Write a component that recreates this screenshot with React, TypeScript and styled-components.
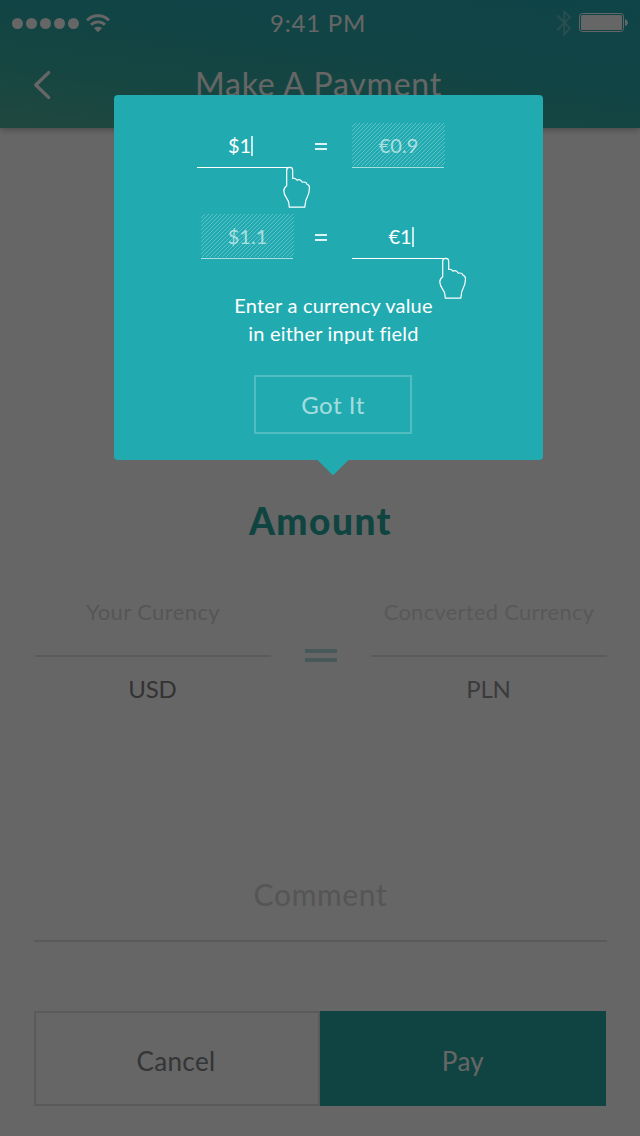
import React from "react";
import styled, { createGlobalStyle } from "styled-components";

const GlobalStyle = createGlobalStyle`
  * { box-sizing: border-box; }
  html, body { margin: 0; padding: 0; background: #fff; }
  body { font-family: Lato, "Liberation Sans", sans-serif; }
  button { font-family: inherit; margin: 0; padding: 0; border: 0; background: none; }
`;

const Screen = styled.div`
  position: relative;
  width: 640px;
  height: 1136px;
  overflow: hidden;
  background: #fff;
  display: flex;
  flex-direction: column;
`;

const Header = styled.header`
  height: 128px;
  flex: none;
  color: #fff;
  background: linear-gradient(188deg, #26aab4 0%, #2caaaa 45%, #3cb0a4 75%, #55b39a 105%);
  box-shadow: 0 1px 7px rgba(0, 0, 0, 0.35);
`;

const StatusBar = styled.div`
  height: 46px;
  display: grid;
  grid-template-columns: 1fr auto 1fr;
  align-items: center;
  padding: 0 12px;
`;

const Signal = styled.div`
  display: flex;
  align-items: center;
  gap: 3px;
  padding-top: 1px;
`;

const Dot = styled.i`
  width: 11px;
  height: 11px;
  border-radius: 50%;
  background: #fff;
`;

const WifiIcon = styled.svg`
  margin-left: 4px;
  display: block;
`;

const Clock = styled.time`
  font-size: 24px;
  line-height: 46px;
  letter-spacing: 0.75px;
  padding-right: 4px;
`;

const Power = styled.div`
  display: flex;
  align-items: center;
  justify-content: flex-end;
  gap: 7px;
`;

const NavBar = styled.nav`
  height: 78px;
  display: grid;
  grid-template-columns: 60px 1fr 60px;
  align-items: center;
`;

const BackButton = styled.button`
  width: 60px;
  height: 78px;
  display: block;
`;

const Title = styled.h1`
  margin: 0;
  text-align: center;
  font-size: 32px;
  line-height: 76px;
  height: 78px;
  font-weight: 400;
  letter-spacing: 0.75px;
  padding-right: 3px;
`;

const Main = styled.main`
  flex: 1;
  display: flex;
  flex-direction: column;
  padding: 370px 33px 30px 34px;
`;

const Heading = styled.h2`
  margin: 0;
  height: 44px;
  line-height: 46px;
  text-align: center;
  font-size: 37px;
  font-weight: 900;
  letter-spacing: 1.5px;
  color: #2aaaa2;
`;

const Conversion = styled.section`
  margin-top: 50px;
  padding-left: 1px;
  display: grid;
  grid-template-columns: 236px 1fr 236px;
`;

const CurrencyField = styled.div`
  text-align: center;
`;

const FieldLabel = styled.div<{ $color: string; $spacing: number }>`
  height: 63px;
  line-height: 40px;
  font-size: 22px;
  letter-spacing: ${(p) => p.$spacing}px;
  color: ${(p) => p.$color};
`;

const Rule = styled.div`
  height: 2px;
  background: #e4e4e4;
`;

const CurrencyCode = styled.div<{ $color: string }>`
  height: 64px;
  line-height: 64px;
  font-size: 24px;
  letter-spacing: -0.2px;
  padding-right: 1px;
  color: ${(p) => p.$color};
`;

const BigEquals = styled.div`
  width: 32px;
  height: 13px;
  margin: 57px 0 0 34px;
  border-top: 4px solid #aedfdb;
  border-bottom: 4px solid #aedfdb;
`;

const Comment = styled.div`
  margin-top: 149px;
  height: 72px;
  line-height: 48px;
  font-size: 30px;
  text-align: center;
  letter-spacing: 0.65px;
  color: #d4d4d4;
  border-bottom: 2px solid #e0e0e0;
`;

const Actions = styled.div`
  margin-top: 69px;
  width: 572px;
  height: 95px;
  display: grid;
  grid-template-columns: 1fr 1fr;
`;

const ActionButton = styled.button<{ $primary?: boolean }>`
  height: 95px;
  padding: 5px ${(p) => (p.$primary ? 0 : 2)}px 0 0;
  font-size: 26px;
  line-height: 86px;
  letter-spacing: 0.35px;
  border: 2px solid ${(p) => (p.$primary ? "#2aaaa5" : "#e2e2e2")};
  background: ${(p) => (p.$primary ? "#2aaaa5" : "transparent")};
  color: ${(p) => (p.$primary ? "#fff" : "#808488")};
`;

const Scrim = styled.div`
  position: absolute;
  inset: 0;
  background: rgba(0, 0, 0, 0.6);
`;

const Popover = styled.div`
  position: absolute;
  left: 114px;
  top: 95px;
  width: 429px;
  height: 365px;
  border-radius: 4px;
  background: #21abb0;
  color: #fff;
  padding-top: 28px;
`;

const Arrow = styled.svg`
  position: absolute;
  left: 203px;
  top: 364px;
`;

const ExampleRow = styled.div`
  height: 45px;
  margin-bottom: 46px;
  padding-left: 83px;
  display: grid;
  grid-template-columns: 96px 59px 93px;
`;

const ExampleField = styled.div<{ $disabled?: boolean; $end?: boolean }>`
  position: relative;
  width: ${(p) => (p.$disabled ? 93 : 92)}px;
  justify-self: ${(p) => (p.$end ? "end" : "start")};
  margin-right: ${(p) => (p.$end ? -1 : 0)}px;
  height: 45px;
  display: flex;
  flex-direction: column;
  color: ${(p) => (p.$disabled ? "rgba(255,255,255,0.6)" : "#fff")};
`;

const ExampleValue = styled.div<{ $disabled?: boolean; $before?: number; $after?: number }>`
  height: 43px;
  margin-bottom: 1px;
  display: flex;
  align-items: center;
  justify-content: center;
  font-size: 20px;
  line-height: 24px;
  padding: 0 ${(p) => p.$after || 0}px 0 ${(p) => p.$before || 0}px;
  background: ${(p) =>
    p.$disabled
      ? "repeating-linear-gradient(135deg, rgba(255,255,255,0.27) 0 0.7px, transparent 0.7px 2.8284px)"
      : "none"};
`;

const Underline = styled.div<{ $disabled?: boolean }>`
  width: 92px;
  height: 1px;
  background: ${(p) => (p.$disabled ? "rgba(255,255,255,0.6)" : "#fff")};
`;

const Caret = styled.i`
  width: 2px;
  height: 20px;
  margin: 2px 0 0 0;
  background: rgba(255, 255, 255, 0.75);
`;

const Equals = styled.div`
  width: 12px;
  height: 7px;
  margin: 20px 0 0 22px;
  border-top: 2px solid rgba(255, 255, 255, 0.85);
  border-bottom: 2px solid rgba(255, 255, 255, 0.85);
`;

const Hand = styled.svg<{ $x: number }>`
  position: absolute;
  left: ${(p) => p.$x}px;
  top: 41px;
`;

const Hint = styled.p`
  margin: -14px 0 0;
  padding-left: 10px;
  text-align: center;
  font-size: 20px;
  line-height: 28px;
  letter-spacing: 0.2px;
`;

const GotItButton = styled.button`
  display: block;
  width: 158px;
  height: 59px;
  margin: 28px 0 0 140px;
  border: 2px solid rgba(255, 255, 255, 0.22);
  color: rgba(255, 255, 255, 0.62);
  font-size: 24px;
  letter-spacing: 0.5px;
`;

const PointingHand = ({ x }: { x: number }) => (
  <Hand $x={x} width="32" height="44" viewBox="0 0 32 44" fill="none" stroke="#fff" strokeWidth="1.2" strokeLinejoin="round">
    <path d="M5.7 21.8V6.2C5.7 2.4 11.7 2.4 11.7 6.2V14.4C13.2 14 14.9 14.6 16 16.2C18 15.3 20.2 16.2 21.3 18.2C23.6 17.5 25.4 18.6 25.8 20C27.6 20.6 28.5 21.8 28.5 23.8C28.5 33 24.4 33.5 24.4 39.2L23.8 43.2H8.3L7.8 39C7.8 35.5 2.8 32.5 2.8 27C2.8 24 3.6 23.2 5.7 21.8Z" />
  </Hand>
);

export default function App() {
  return (
    <>
      <GlobalStyle />
      <Screen>
        <Header>
          <StatusBar>
            <Signal>
              {[0, 1, 2, 3, 4].map((n) => (
                <Dot key={n} />
              ))}
              <WifiIcon width="24" height="19" viewBox="0 0 24 19" fill="none" stroke="#fff">
                <path d="M1 6.4C7 .2 17 .2 23 6.4" strokeWidth="2.8" />
                <path d="M5 10.8C9 6.8 15 6.8 19 10.8" strokeWidth="2.8" />
                <path d="M12 18.2L8 14.2C10.2 12.3 13.8 12.3 16 14.2Z" fill="#fff" stroke="none" />
              </WifiIcon>
            </Signal>
            <Clock>9:41 PM</Clock>
            <Power>
              <svg width="16" height="28" viewBox="0 0 16 28" fill="none" stroke="#fff" strokeOpacity="0.3" strokeWidth="1.8">
                <path d="M1.2 6.5L14 19.3L8.2 25.2V2.8L14 8.2L1.2 21" />
              </svg>
              <svg width="49" height="20" viewBox="0 0 49 20">
                <rect x="0.5" y="0.5" width="44" height="18" rx="3" fill="none" stroke="#fff" />
                <rect x="2" y="2" width="41" height="15" rx="1.5" fill="#fff" />
                <path d="M46 6.2C49.8 6.6 49.8 12.4 46 12.8Z" fill="#fff" />
              </svg>
            </Power>
          </StatusBar>
          <NavBar>
            <BackButton aria-label="Back">
              <svg width="60" height="78" viewBox="0 0 60 78" fill="none" stroke="#fff" strokeWidth="3.4" strokeLinecap="round" strokeLinejoin="round">
                <path d="M48.6 26.6L35.8 39L48.6 51.4" />
              </svg>
            </BackButton>
            <Title>Make A Payment</Title>
          </NavBar>
        </Header>
        <Main>
          <Heading>Amount</Heading>
          <Conversion>
            <CurrencyField>
              <FieldLabel $color="#d6d6d6" $spacing={0.4}>Your Curency</FieldLabel>
              <Rule />
              <CurrencyCode $color="#808080">USD</CurrencyCode>
            </CurrencyField>
            <BigEquals />
            <CurrencyField>
              <FieldLabel $color="#dddddd" $spacing={0.25}>Concverted Currency</FieldLabel>
              <Rule />
              <CurrencyCode $color="#949494">PLN</CurrencyCode>
            </CurrencyField>
          </Conversion>
          <Comment>Comment</Comment>
          <Actions>
            <ActionButton>Cancel</ActionButton>
            <ActionButton $primary>Pay</ActionButton>
          </Actions>
        </Main>
        <Scrim />
        <Popover>
          <ExampleRow>
            <ExampleField>
              <ExampleValue $after={5}>
                $1
                <Caret />
              </ExampleValue>
              <Underline />
              <PointingHand x={84} />
            </ExampleField>
            <Equals />
            <ExampleField $disabled>
              <ExampleValue $disabled>€0.9</ExampleValue>
              <Underline $disabled />
            </ExampleField>
          </ExampleRow>
          <ExampleRow>
            <ExampleField $disabled $end>
              <ExampleValue $disabled>$1.1</ExampleValue>
              <Underline $disabled />
            </ExampleField>
            <Equals />
            <ExampleField>
              <ExampleValue $before={6}>
                €1
                <Caret />
              </ExampleValue>
              <Underline />
              <PointingHand x={85} />
            </ExampleField>
          </ExampleRow>
          <Hint>
            Enter a currency value
            <br />
            in either input field
          </Hint>
          <GotItButton>Got It</GotItButton>
          <Arrow width="32" height="17" viewBox="0 0 32 17">
            <path d="M0 0.5H32L17.2 15.2Q16 16.2 14.8 15.2Z" fill="#21abb0" />
          </Arrow>
        </Popover>
      </Screen>
    </>
  );
}
